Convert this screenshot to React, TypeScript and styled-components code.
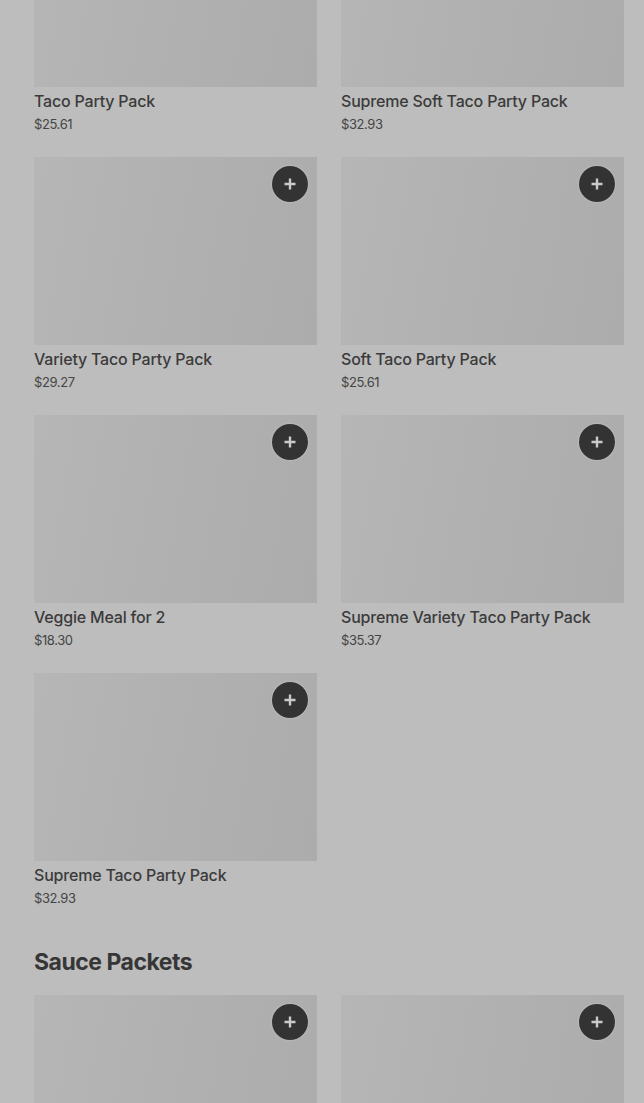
import styled, { createGlobalStyle } from "styled-components";

const Global = createGlobalStyle`
  html, body {
    margin: 0;
    padding: 0;
    background: #bdbdbd;
    overflow: hidden;
  }
  body {
    font-family: Inter, "Noto Sans", sans-serif;
    color: #3a3a3a;
  }
`;

type Item = { name: string; price: string };

const partyPacks: Item[] = [
  { name: "Taco Party Pack", price: "$25.61" },
  { name: "Supreme Soft Taco Party Pack", price: "$32.93" },
  { name: "Variety Taco Party Pack", price: "$29.27" },
  { name: "Soft Taco Party Pack", price: "$25.61" },
  { name: "Veggie Meal for 2", price: "$18.30" },
  { name: "Supreme Variety Taco Party Pack", price: "$35.37" },
  { name: "Supreme Taco Party Pack", price: "$32.93" },
];

// sauce cards sit below the fold, only their pictures show
const sauces = ["mild", "hot"];

const Page = styled.div`
  padding: 0 20px 0 34px;
  margin-top: -101.5px;
`;

const Section = styled.section`
  margin-bottom: 40px;
`;

const Heading = styled.h2`
  margin: 0 0 18px;
  font-size: 23px;
  line-height: 30px;
  font-weight: 700;
  letter-spacing: -0.5px;
  color: #363636;
`;

const Grid = styled.div`
  display: grid;
  grid-template-columns: 283px 283px;
  column-gap: 24px;
  row-gap: 24px;
`;

const Card = styled.div`
  display: flex;
  flex-direction: column;
`;

const Thumb = styled.div`
  position: relative;
  height: 188px;
  background: linear-gradient(100deg, #b6b6b6 0%, #b1b1b1 45%, #acacac 100%);
`;

const AddButton = styled.button`
  position: absolute;
  top: 9px;
  right: 9px;
  width: 36px;
  height: 36px;
  border-radius: 50%;
  border: none;
  padding: 0;
  background: #333333;
  box-shadow: 0 0 2px rgba(220, 220, 220, 0.8);
  display: flex;
  align-items: center;
  justify-content: center;
  cursor: pointer;
`;

const Name = styled.div`
  margin-top: 3px;
  font-size: 16px;
  line-height: 22px;
  font-weight: 500;
  letter-spacing: -0.2px;
  color: #3b3b3b;
`;

const Price = styled.div`
  margin-top: 3px;
  font-size: 13px;
  line-height: 18px;
  font-weight: 400;
  letter-spacing: -0.4px;
  color: #454545;
`;

const Plus = () => (
  <svg width="14" height="14" viewBox="0 0 14 14">
    <path d="M7 1.5v11M1.5 7h11" stroke="#cacaca" strokeWidth="2.4" />
  </svg>
);

const Picture = () => (
  <Thumb>
    <AddButton aria-label="Add">
      <Plus />
    </AddButton>
  </Thumb>
);

const ItemCard = ({ item }: { item: Item }) => (
  <Card>
    <Picture />
    <Name>{item.name}</Name>
    <Price>{item.price}</Price>
  </Card>
);

export default function App() {
  return (
    <>
      <Global />
      <Page>
        <Section>
          <Grid>
            {partyPacks.map((it) => (
              <ItemCard key={it.name} item={it} />
            ))}
          </Grid>
        </Section>
        <Section>
          <Heading>Sauce Packets</Heading>
          <Grid>
            {sauces.map((s) => (
              <Card key={s}>
                <Picture />
              </Card>
            ))}
          </Grid>
        </Section>
      </Page>
    </>
  );
}
